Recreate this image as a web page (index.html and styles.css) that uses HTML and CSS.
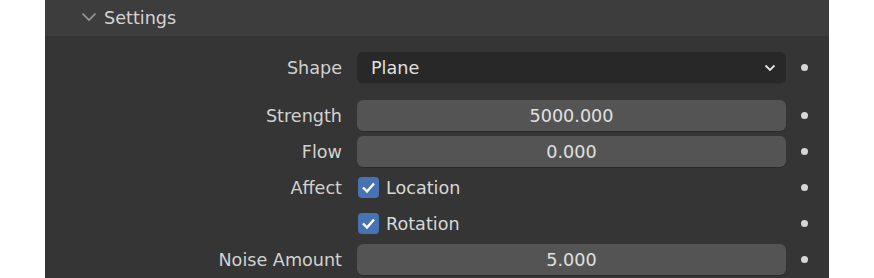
FILE: index.html
```html
<!DOCTYPE html>
<html>
<head>
<meta charset="utf-8">
<link rel="stylesheet" href="styles.css">
</head>
<body>
<div class="panel">
  <div class="header">
    <svg class="hchev" width="16" height="10" viewBox="0 0 16 10"><path d="M1.5 1.5 L8 8 L14.5 1.5" fill="none" stroke="#9a9a9a" stroke-width="1.6"/></svg>
    <span class="title">Settings</span>
  </div>
  <div class="content">
    <div class="row">
      <div class="label">Shape</div>
      <div class="field dropdown"><span class="txt">Plane</span>
        <svg class="dchev" width="12" height="8" viewBox="0 0 12 8"><path d="M1.5 1.5 L6 6 L10.5 1.5" fill="none" stroke="#e6e6e6" stroke-width="1.8"/></svg>
      </div>
      <div class="dotcell"><span class="dot"></span></div>
    </div>
    <div class="row gap">
      <div class="label">Strength</div>
      <div class="field num"><span class="txt">5000.000</span></div>
      <div class="dotcell"><span class="dot"></span></div>
    </div>
    <div class="row">
      <div class="label">Flow</div>
      <div class="field num"><span class="txt">0.000</span></div>
      <div class="dotcell"><span class="dot"></span></div>
    </div>
    <div class="row">
      <div class="label">Affect</div>
      <div class="check"><span class="box"><svg width="21" height="21" viewBox="0 0 21 21"><path d="M5 10.5 L9 14.5 L16 6.5" fill="none" stroke="#ffffff" stroke-width="2.4"/></svg></span><span class="clabel txt">Location</span></div>
      <div class="dotcell"><span class="dot"></span></div>
    </div>
    <div class="row">
      <div class="label"></div>
      <div class="check"><span class="box"><svg width="21" height="21" viewBox="0 0 21 21"><path d="M5 10.5 L9 14.5 L16 6.5" fill="none" stroke="#ffffff" stroke-width="2.4"/></svg></span><span class="clabel txt">Rotation</span></div>
      <div class="dotcell"><span class="dot"></span></div>
    </div>
    <div class="row">
      <div class="label">Noise Amount</div>
      <div class="field num"><span class="txt">5.000</span></div>
      <div class="dotcell"><span class="dot"></span></div>
    </div>
    <div class="row">
      <div class="label"></div>
      <div class="field num"></div>
      <div class="dotcell"></div>
    </div>
  </div>
</div>
</body>
</html>
```
FILE: styles.css
```css
html, body {
  margin: 0;
  padding: 0;
  background: #ffffff;
  height: 278px;
  overflow: hidden;
}
.panel {
  margin-left: 45px;
  width: 784px;
  height: 278px;
  background: #353535;
  font-family: "DejaVu Sans", sans-serif;
  font-size: 17.6px;
  color: #d2d2d2;
  overflow: hidden;
}
.header {
  height: 36px;
  background: #3d3d3d;
  display: flex;
  align-items: center;
}
.hchev {
  margin-left: 36px;
  margin-top: -2px;
}
.title {
  margin-left: 7px;
  margin-top: -1px;
  color: #d4d4d4;
}
.content {
  padding-top: 13px;
}
.row {
  display: grid;
  grid-template-columns: 297px 429px 28px;
  column-gap: 15px;
  height: 36px;
  align-items: center;
}
.row.gap {
  margin-top: 12px;
}
.label {
  text-align: right;
  padding-top: 2px;
}
.txt {
  padding-top: 2px;
}
.field {
  height: 31px;
  border-radius: 6px;
  box-sizing: border-box;
}
.dropdown {
  background: #282828;
  box-shadow: 0 1px 0 #2e2e2e;
  display: flex;
  align-items: center;
  justify-content: space-between;
  padding: 0 10px 0 14px;
}
.dropdown .txt {
  color: #e0e0e0;
}
.dchev {
  margin-top: 2px;
}
.num {
  background: #545454;
  box-shadow: 0 1px 0 #2b2b2b;
  display: flex;
  align-items: center;
  justify-content: center;
  color: #e0e0e0;
}
.check {
  display: flex;
  align-items: center;
  padding-left: 1px;
}
.box {
  width: 21px;
  height: 21px;
  border-radius: 4px;
  background: #4772b3;
  display: block;
}
.box svg {
  display: block;
}
.clabel {
  margin-left: 7px;
  color: #d8d8d8;
}
.dotcell {
  display: flex;
  align-items: center;
}
.dot {
  width: 7px;
  height: 7px;
  border-radius: 50%;
  background: #d6d6d6;
  display: block;
}
```
